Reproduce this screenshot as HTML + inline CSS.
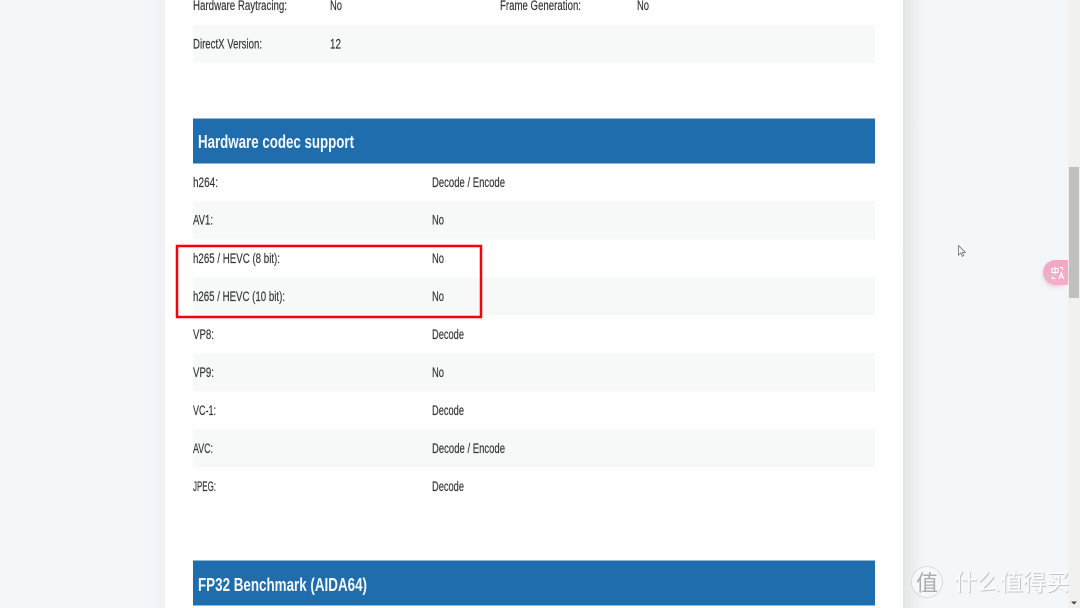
<!DOCTYPE html>
<html>
<head>
<meta charset="utf-8">
<style>
html,body{margin:0;padding:0;width:1080px;height:608px;overflow:hidden;background:#f4f7f9}
svg{display:block;position:absolute;left:0;top:0}
.t{font-family:"Liberation Sans","Noto Sans CJK SC",sans-serif;font-size:13.5px;fill:#333;stroke:#333;stroke-width:.15px}
.h{font-family:"Liberation Sans",sans-serif;font-size:18.5px;font-weight:bold;fill:#f4f8fb}
</style>
</head>
<body>
<svg width="1080" height="608" viewBox="0 0 1080 608" xmlns="http://www.w3.org/2000/svg">
<defs>
<linearGradient id="l" x1="0" x2="1" y1="0" y2="0"><stop offset="0" stop-color="#f4f7f9"/><stop offset="1" stop-color="#eff1f6"/></linearGradient>
<linearGradient id="r" x1="0" x2="1" y1="0" y2="0"><stop offset="0" stop-color="#e3e6e7"/><stop offset="1" stop-color="#f4f7f9"/></linearGradient>
<linearGradient id="p" x1="0" x2="0" y1="0" y2="1"><stop offset="0" stop-color="#f2a6c4"/><stop offset="1" stop-color="#f5afca"/></linearGradient>
<filter id="b" x="-5%" y="-5%" width="110%" height="110%"><feGaussianBlur stdDeviation="0.3"/></filter>
<filter id="s" x="-50%" y="-50%" width="200%" height="200%"><feGaussianBlur stdDeviation="2.5"/></filter>
</defs>
<rect width="1080" height="608" fill="#f4f7f9"/>
<rect x="140" y="0" width="25" height="608" fill="url(#l)"/>
<rect x="165" y="0" width="738" height="608" fill="#fefefe"/>
<rect x="903" y="0" width="22" height="608" fill="url(#r)"/>

<rect x="193" y="25" width="682" height="37.500" fill="#f7f8f8"/>
<rect x="193" y="201.500" width="682" height="38" fill="#f7f8f8"/>
<rect x="193" y="277.500" width="682" height="38" fill="#f7f8f8"/>
<rect x="193" y="353.500" width="682" height="38" fill="#f7f8f8"/>
<rect x="193" y="429.500" width="682" height="38" fill="#f7f8f8"/>

<rect x="193" y="118.500" width="682" height="45" fill="#1f6dac"/>
<rect x="193" y="560.500" width="682" height="45" fill="#1f6dac"/>

<g filter="url(#b)">
<text class="t" x="193" y="10" textLength="94" lengthAdjust="spacingAndGlyphs">Hardware Raytracing:</text>
<text class="t" x="330" y="10" textLength="12" lengthAdjust="spacingAndGlyphs">No</text>
<text class="t" x="500" y="10" textLength="81" lengthAdjust="spacingAndGlyphs">Frame Generation:</text>
<text class="t" x="637" y="10" textLength="12" lengthAdjust="spacingAndGlyphs">No</text>
<text class="t" x="193" y="48.500" textLength="69" lengthAdjust="spacingAndGlyphs">DirectX Version:</text>
<text class="t" x="330" y="48.500" textLength="11" lengthAdjust="spacingAndGlyphs">12</text>

<text class="h" x="198" y="148" textLength="156" lengthAdjust="spacingAndGlyphs">Hardware codec support</text>

<text class="t" x="193" y="187" textLength="25" lengthAdjust="spacingAndGlyphs">h264:</text>
<text class="t" x="432" y="187" textLength="73" lengthAdjust="spacingAndGlyphs">Decode / Encode</text>
<text class="t" x="193" y="224.500" textLength="20" lengthAdjust="spacingAndGlyphs">AV1:</text>
<text class="t" x="432" y="224.500" textLength="12" lengthAdjust="spacingAndGlyphs">No</text>
<text class="t" x="193" y="263" textLength="87" lengthAdjust="spacingAndGlyphs">h265 / HEVC (8 bit):</text>
<text class="t" x="432" y="263" textLength="12" lengthAdjust="spacingAndGlyphs">No</text>
<text class="t" x="193" y="301" textLength="92" lengthAdjust="spacingAndGlyphs">h265 / HEVC (10 bit):</text>
<text class="t" x="432" y="301" textLength="12" lengthAdjust="spacingAndGlyphs">No</text>
<text class="t" x="193" y="339" textLength="21" lengthAdjust="spacingAndGlyphs">VP8:</text>
<text class="t" x="432" y="339" textLength="32" lengthAdjust="spacingAndGlyphs">Decode</text>
<text class="t" x="193" y="377" textLength="21" lengthAdjust="spacingAndGlyphs">VP9:</text>
<text class="t" x="432" y="377" textLength="12" lengthAdjust="spacingAndGlyphs">No</text>
<text class="t" x="193" y="415" textLength="23" lengthAdjust="spacingAndGlyphs">VC-1:</text>
<text class="t" x="432" y="415" textLength="32" lengthAdjust="spacingAndGlyphs">Decode</text>
<text class="t" x="193" y="453" textLength="20" lengthAdjust="spacingAndGlyphs">AVC:</text>
<text class="t" x="432" y="453" textLength="73" lengthAdjust="spacingAndGlyphs">Decode / Encode</text>
<text class="t" x="193" y="491" textLength="23" lengthAdjust="spacingAndGlyphs">JPEG:</text>
<text class="t" x="432" y="491" textLength="32" lengthAdjust="spacingAndGlyphs">Decode</text>

<text class="h" x="198" y="591" textLength="169" lengthAdjust="spacingAndGlyphs">FP32 Benchmark (AIDA64)</text>
</g>

<rect x="177" y="246" width="304" height="71" fill="none" stroke="#f4000f" stroke-width="2.500"/>

<!-- scrollbar -->
<rect x="1068" y="0" width="12" height="608" fill="#f1f2f0"/>
<rect x="1069" y="167" width="10" height="131" fill="#c0c1bf"/>
<path d="M1071 601.500h6l-3 3z" fill="#444"/>

<!-- translate button -->
<rect x="1043" y="262" width="26" height="25" rx="12" fill="#c9a7b8" opacity=".45" filter="url(#s)"/>
<path d="M1068 260h-12.500a12.500 12.500 0 0 0 0 25H1068z" fill="url(#p)"/>
<g fill="none" stroke="#fff" stroke-width="1.100">
<path d="M1052 268.500h6v4h-6zM1055 267v7.500"/>
<path d="M1052.500 276v2.500h3"/>
<path d="M1059.500 267.500h3v2.500"/>
<path d="M1059 279l2.300-6.500 2.300 6.500M1059.800 277h3"/>
</g>

<!-- cursor -->
<path d="M958.500 245.500v9.500l2.300-2 1.500 3.300 1.500-.7-1.500-3.200h3z" fill="#f8fafb" stroke="#7b7f82" stroke-width=".9"/>

<!-- watermark -->
<g filter="url(#b)">
<circle cx="927" cy="582" r="15.500" fill="#f7f8f8" stroke="#d2d5d6" stroke-width=".8"/>
<text x="927" y="591" text-anchor="middle" font-family="'Noto Sans CJK SC',sans-serif" font-size="22" fill="#a9adaf">值</text>
<text x="955" y="591" font-family="'Noto Sans CJK SC',sans-serif" font-size="23" fill="#c3c7c9" textLength="115" lengthAdjust="spacingAndGlyphs">什么值得买</text>
<text x="954" y="590" font-family="'Noto Sans CJK SC',sans-serif" font-size="23" fill="#fbfcfc" textLength="115" lengthAdjust="spacingAndGlyphs">什么值得买</text>
</g>
</svg>
</body>
</html>
